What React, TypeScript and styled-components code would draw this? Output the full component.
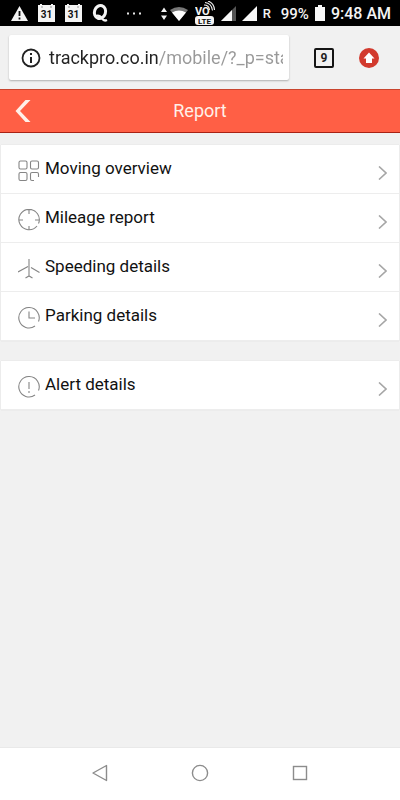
import React from "react";
import styled, { createGlobalStyle } from "styled-components";

const GlobalStyle = createGlobalStyle`
  *, *::before, *::after { box-sizing: border-box; }
  body { margin: 0; background: #f1f1f1; font-family: Roboto, "Liberation Sans", sans-serif; }
  svg { display: block; flex: none; }
  button { border: 0; padding: 0; background: none; font: inherit; cursor: pointer; }
`;

const Screen = styled.div`
  display: flex;
  flex-direction: column;
  min-height: 100vh;
`;

const StatusBar = styled.div`
  display: flex;
  align-items: center;
  justify-content: space-between;
  height: 26px;
  padding: 0 9px 0 11px;
  background: #000;
  color: #f4f4f4;
`;

const StatusGroup = styled.div<{ $gap: number }>`
  display: flex;
  align-items: center;
  gap: ${(p) => p.$gap}px;
`;

const StatusText = styled.span<{ $size: number }>`
  padding-top: 2px;
  font-size: ${(p) => p.$size}px;
  line-height: 20px;
  font-weight: 500;
  white-space: nowrap;
`;

const BrowserBar = styled.div`
  display: flex;
  align-items: center;
  height: 63px;
  padding: 0 21px 0 9px;
  gap: 25px;
`;

const AddressBox = styled.label`
  display: flex;
  flex: 1;
  min-width: 0;
  align-items: center;
  gap: 8px;
  height: 45px;
  padding: 0 6px 0 12px;
  border-radius: 2px;
  background: #fff;
  box-shadow: 0 1px 2px rgba(0, 0, 0, 0.28);
`;

const AddressInput = styled.input`
  flex: 1;
  min-width: 0;
  height: 30px;
  padding: 0;
  border: 0;
  outline: 0;
  font-family: inherit;
  font-size: 18px;
  color: transparent;
  background: linear-gradient(to right, #222 109px, #999 109px);
  background-clip: text;
  -webkit-background-clip: text;
`;

const TabsButton = styled.button`
  width: 20px;
  height: 20px;
  border: 2px solid #151515;
  border-radius: 2px;
  font-size: 12px;
  font-weight: 700;
  line-height: 16px;
  color: #222;
`;

const UpdateButton = styled.button`
  width: 20px;
  height: 20px;
`;

const TitleBar = styled.header`
  display: grid;
  grid-template-columns: 44px 1fr 44px;
  align-items: center;
  height: 44px;
  background: #ff5f45;
  border-top: 1px solid #c9452f;
  border-bottom: 1px solid #a82214;
`;

const BackButton = styled.button`
  display: flex;
  align-items: center;
  height: 42px;
  padding-left: 15px;
`;

const Title = styled.h1`
  margin: 0;
  text-align: center;
  font-size: 18px;
  line-height: 24px;
  font-weight: 400;
  color: #fff0e9;
`;

const Content = styled.main`
  flex: 1;
  display: flex;
  flex-direction: column;
  gap: 20px;
  padding: 12px 1px;
`;

const List = styled.ul`
  list-style: none;
  margin: 0;
  padding: 0;
  background: #fff;
  box-shadow: 0 0 1px rgba(0, 0, 0, 0.12);
`;

const Item = styled.li`
  border-bottom: 1px solid #ededed;
`;

const ItemLink = styled.a`
  display: flex;
  align-items: center;
  height: 48px;
  padding: 0 12px 0 17px;
  gap: 5px;
  color: #111;
  text-decoration: none;
  font-size: 17px;
  line-height: 24px;
`;

const ItemLabel = styled.span`
  flex: 1;
  padding-bottom: 2px;
`;

const IconSlot = styled.span`
  padding-top: 4px;
`;

const ArrowSlot = styled.span`
  padding-top: 8px;
`;

const NavBar = styled.nav`
  display: flex;
  justify-content: center;
  gap: 76px;
  height: 53px;
  padding-top: 13px;
  background: #fff;
  border-top: 1px solid #e9e9e9;
`;

const NavButton = styled.button`
  width: 24px;
  height: 24px;
`;

const CalendarIcon = () => (
  <svg width="17" height="18" viewBox="0 0 17 18" aria-hidden="true">
    <path d="M0 1h2V0h2v1h9V0h2v1h2v17H0z" fill="#f4f4f4" />
    <path d="M3 3h2M12 3h2" stroke="#999" />
    <text x="8.5" y="14" textAnchor="middle" fontSize="10" fontWeight="700" fill="#111">31</text>
  </svg>
);

const SystemIcons = () => (
  <>
    <svg width="28" height="20" viewBox="0 0 28 20" aria-label="Wi-Fi">
      <path d="M3 4.500 6 9H0zM3 17 6 12.500H0z" fill="#f4f4f4" />
      <path d="M9 7Q18 1 27 7L18 18z" fill="#777" />
      <path d="M11 9.500Q18 5.500 25 9.500L18 18z" fill="#fff" />
    </svg>
    <svg width="20" height="24" viewBox="0 0 20 24" aria-label="VoLTE">
      <text x="0" y="14" fontSize="11" fontWeight="700" fill="#f4f4f4">VO</text>
      <path d="M9 4q5 0 5.500 5M10 1.500q6.500 .5 7.500 8M13 0q6 2 6.500 9" fill="none" stroke="#f4f4f4" strokeWidth="1.100" />
      <rect y="15" width="19" height="9" rx="3" fill="#f4f4f4" />
      <text x="9.500" y="22.500" textAnchor="middle" fontSize="8" fontWeight="700" fill="#111">LTE</text>
    </svg>
    <svg width="15" height="15" viewBox="0 0 15 15" aria-label="Signal one">
      <path d="M15 0v15H0z" fill="#555" />
      <path d="M11 4v11H0z" fill="#f8f8f8" />
    </svg>
    <svg width="15" height="15" viewBox="0 0 15 15" aria-label="Signal two">
      <path d="M15 0v15H0z" fill="#f8f8f8" />
    </svg>
  </>
);

const stroke = { fill: "none", stroke: "#858585", strokeWidth: 1.1 };

const icons: Record<string, React.ReactNode> = {
  grid: (
    <g {...stroke}>
      <rect x="1" y="1" width="8" height="8" rx="1.500" />
      <rect x="12.500" y="1" width="8" height="8" rx="1.500" />
      <rect x="1" y="12.500" width="8" height="8" rx="1.500" />
      <path d="M16 20.500h-2q-1.500 0-1.500-1.500v-5q0-1.500 1.500-1.500h5q1.500 0 1.500 1.500V17" />
    </g>
  ),
  target: (
    <g {...stroke}>
      <path d="M20.500 14.500A10.200 10.200 0 1 0 19 17M11 1v4M11 17v4M1 11h4M17 11h4" />
    </g>
  ),
  plane: (
    <g {...stroke}>
      <path d="M11 1v17M10 8.500 0 14M13 9.500 21.500 14.500M7.500 20 11 18l3.500 2" />
    </g>
  ),
  clock: (
    <g {...stroke}>
      <path d="M20.500 14.500A10.200 10.200 0 1 0 17 19M11 4.500V11h6" />
    </g>
  ),
  alert: (
    <g {...stroke}>
      <path d="M20.500 14.500A10.200 10.200 0 1 0 17 19" />
      <path d="M11 6v7M11 15v2" />
    </g>
  ),
};

const groups = [
  [
    { icon: "grid", label: "Moving overview" },
    { icon: "target", label: "Mileage report" },
    { icon: "plane", label: "Speeding details" },
    { icon: "clock", label: "Parking details" },
  ],
  [{ icon: "alert", label: "Alert details" }],
];

export default function App() {
  return (
    <Screen>
      <GlobalStyle />
      <StatusBar>
        <StatusGroup $gap={10}>
          <svg width="17" height="15" viewBox="0 0 17 15" aria-label="Warning">
            <path d="M8.500 0 17 15H0z" fill="#f4f4f4" />
            <path d="M8.500 5v5M8.500 11.500v2" stroke="#111" strokeWidth="1.800" />
          </svg>
          <CalendarIcon />
          <CalendarIcon />
          <svg width="16" height="20" viewBox="0 0 16 20" aria-label="Quora">
            <ellipse cx="8" cy="9" rx="5.500" ry="6.600" fill="none" stroke="#f4f4f4" strokeWidth="3" transform="rotate(18 8 9)" />
            <path d="M3.500 13q4-1.500 6.500 2.500 2 3 5 1.500" fill="none" stroke="#f4f4f4" strokeWidth="2.200" />
          </svg>
        </StatusGroup>
        <svg width="14" height="3" viewBox="0 0 14 3" aria-hidden="true">
          <path d="M0 .5h2v2H0zM6 .5h2v2H6zM12 .5h2v2h-2z" fill="#e6e6e6" />
        </svg>
        <StatusGroup $gap={10}>
          <StatusGroup $gap={6}>
            <SystemIcons />
            <StatusText $size={13}>R</StatusText>
          </StatusGroup>
          <StatusGroup $gap={6}>
            <StatusText $size={15}>99%</StatusText>
            <svg width="10" height="16" viewBox="0 0 10 16" aria-label="Battery">
              <path d="M3 0h4v2h3v14H0V2h3z" fill="#f8f8f8" />
            </svg>
            <StatusText $size={16}>9:48 AM</StatusText>
          </StatusGroup>
        </StatusGroup>
      </StatusBar>

      <BrowserBar>
        <AddressBox>
          <svg width="20" height="20" viewBox="0 0 20 20" aria-hidden="true">
            <circle cx="10" cy="10" r="8.500" fill="none" stroke="#222" strokeWidth="1.800" />
            <path d="M10 5v2M10 9v6" stroke="#222" strokeWidth="2" />
          </svg>
          <AddressInput aria-label="Address" defaultValue="trackpro.co.in/mobile/?_p=sta" />
        </AddressBox>
        <TabsButton aria-label="9 open tabs">9</TabsButton>
        <UpdateButton aria-label="Update">
          <svg width="20" height="20" viewBox="0 0 20 20">
            <circle cx="10" cy="10" r="10" fill="#d23a2e" />
            <path d="M10 4.500 15.500 10.500H13V15H7v-4.500H4.500z" fill="#fff" />
          </svg>
        </UpdateButton>
      </BrowserBar>

      <TitleBar>
        <BackButton aria-label="Back">
          <svg width="16" height="22" viewBox="0 0 16 22">
            <path d="M10.500 0H15.500L5 11 15.500 22H10.500L0.500 11z" fill="#fff0e9" />
          </svg>
        </BackButton>
        <Title>Report</Title>
      </TitleBar>

      <Content>
        {groups.map((items, i) => (
          <List key={i}>
            {items.map(({ icon, label }) => (
              <Item key={label}>
                <ItemLink href="#">
                  <IconSlot>
                    <svg width="22" height="22" viewBox="0 0 22 22" aria-hidden="true">{icons[icon]}</svg>
                  </IconSlot>
                  <ItemLabel>{label}</ItemLabel>
                  <ArrowSlot>
                    <svg width="9" height="14" viewBox="0 0 9 14" aria-hidden="true">
                      <path d="M1 .5 8 7 1 13.500" fill="none" stroke="#a6a6a6" strokeWidth="1.600" />
                    </svg>
                  </ArrowSlot>
                </ItemLink>
              </Item>
            ))}
          </List>
        ))}
      </Content>

      <NavBar aria-label="System navigation">
        <NavButton aria-label="Back">
          <svg width="24" height="24" viewBox="0 0 24 24">
            <path d="M18.500 4.500v15L5 12z" fill="none" stroke="#8c8c8c" strokeWidth="1.400" strokeLinejoin="round" />
          </svg>
        </NavButton>
        <NavButton aria-label="Home">
          <svg width="24" height="24" viewBox="0 0 24 24">
            <circle cx="12" cy="12" r="7.600" fill="none" stroke="#8c8c8c" strokeWidth="1.400" />
          </svg>
        </NavButton>
        <NavButton aria-label="Recent apps">
          <svg width="24" height="24" viewBox="0 0 24 24">
            <rect x="5.500" y="5.500" width="13" height="13" fill="none" stroke="#8c8c8c" strokeWidth="1.400" />
          </svg>
        </NavButton>
      </NavBar>
    </Screen>
  );
}
